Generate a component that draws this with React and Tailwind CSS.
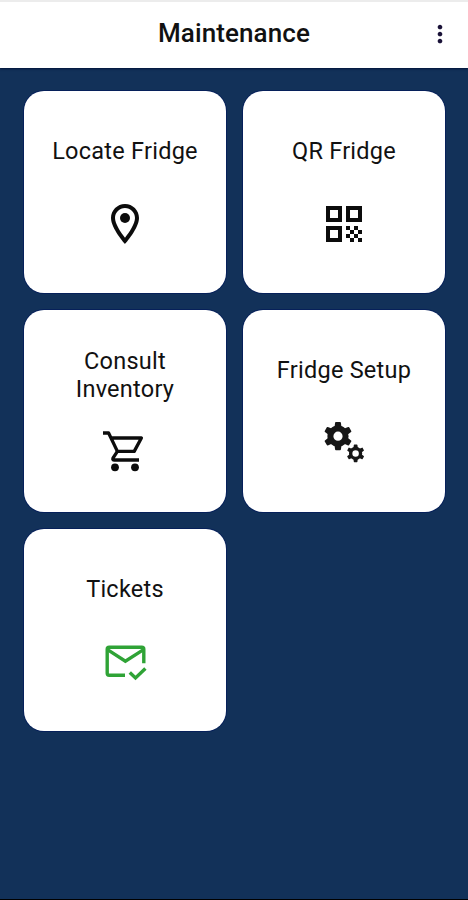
import React from 'react';
import { MdMoreVert, MdOutlineLocationOn, MdQrCode } from 'react-icons/md';

// ring with six teeth, drawn around its own centre
const Gear = ({ transform, hole }) => (
  <g transform={transform}>
    {[0, 60, 120, 180, 240, 300].map((angle) => (
      <path
        key={angle}
        d="M-3.6 -8L-2.9 -13.4Q-2.8 -14.1 -2.1 -14.1H2.1Q2.8 -14.1 2.9 -13.4L3.6 -8Z"
        fill="currentColor"
        transform={`rotate(${angle})`}
      />
    ))}
    <circle r={(10.6 + hole) / 2} fill="none" stroke="currentColor" strokeWidth={10.6 - hole} />
  </g>
);

const GearsIcon = () => (
  <svg viewBox="0 0 48 48" className="h-12 w-12">
    <Gear transform="translate(18 17.2)" hole={4.6} />
    <Gear transform="translate(35.6 34.4) scale(0.625)" hole={5.2} />
  </svg>
);

const CartIcon = () => (
  <svg viewBox="0 0 48 48" className="h-12 w-12" fill="none" stroke="currentColor" strokeWidth="3.3">
    <path d="M2 5H7.6L16.4 23.4H33.2L40.4 10H10" strokeLinejoin="round" />
    <path d="M16.4 23.4L12 30Q11.2 32 13.4 32H38" />
    <circle cx="14" cy="39.3" r="3.9" fill="currentColor" stroke="none" />
    <circle cx="34" cy="39.3" r="3.9" fill="currentColor" stroke="none" />
  </svg>
);

const MailCheckIcon = () => (
  <svg viewBox="0 0 48 48" className="h-12 w-12" fill="none" stroke="currentColor" strokeWidth="3.4">
    <path d="M24 37.2H8.2a2 2 0 0 1-2-2V11.2a2 2 0 0 1 2-2h32.6a2 2 0 0 1 2 2V25.2" />
    <path d="M6.5 11.6L24.4 23.2L42.5 11.6" />
    <path d="M28.8 34.6L34.5 40L44.4 30.6" />
  </svg>
);

const tiles = [
  { title: 'Locate Fridge', icon: <MdOutlineLocationOn size={48} />, color: 'text-[#0c0c0c]', gap: 'gap-[34px]' },
  { title: 'QR Fridge', icon: <MdQrCode size={48} />, color: 'text-[#0c0c0c]', gap: 'gap-[34px]' },
  { title: 'Consult Inventory', icon: <CartIcon />, color: 'text-[#0c0c0c]', gap: 'gap-[25px]' },
  { title: 'Fridge Setup', icon: <GearsIcon />, color: 'text-[#161616]', gap: 'gap-[34px]' },
  { title: 'Tickets', icon: <MailCheckIcon />, color: 'text-[#2fa336]', gap: 'gap-[34px]' },
];

const Tile = ({ title, icon, color, gap }) => (
  <button
    className={`flex h-[202px] flex-col items-center justify-center rounded-[20px] bg-white pt-0.5 pr-6 pl-[25px] shadow-[0_0_0_1px_#06205a] ${gap}`}
  >
    <span className="text-center text-[23.5px] leading-[27.5px] tracking-[0.25px] text-[#111111]">{title}</span>
    <span className={color}>{icon}</span>
  </button>
);

const App = () => {
  return (
    <div className="flex h-screen flex-col overflow-hidden border-b border-black bg-[#123159] font-['Roboto',sans-serif]">
      {/* App bar */}
      <header className="grid h-[68px] shrink-0 grid-cols-[56px_1fr_56px] items-center border-t-2 border-[#ececec] bg-white shadow-[0_1px_2px_#001238]">
        <h1 className="col-start-2 pb-[3px] text-center text-[26px] font-medium tracking-[0.1px] text-[#111111]">Maintenance</h1>
        <button className="flex justify-center pb-0.5 text-[#1a1238]">
          <MdMoreVert size={28} />
        </button>
      </header>

      {/* Menu tiles */}
      <main className="grid grid-cols-2 gap-[17px] px-[23.5px] pt-[23px]">
        {tiles.map((tile) => (
          <Tile key={tile.title} {...tile} />
        ))}
      </main>
    </div>
  );
};

export default App;
